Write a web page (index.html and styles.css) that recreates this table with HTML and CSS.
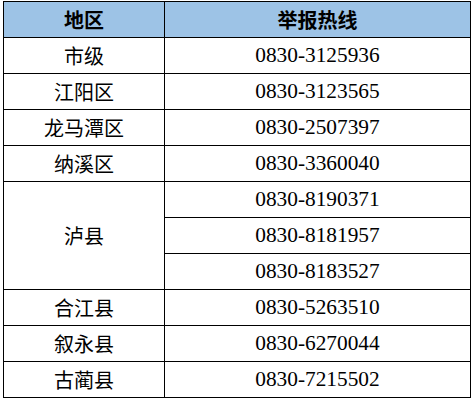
FILE: index.html
```html
<!DOCTYPE html>
<html lang="zh">
<head>
<meta charset="utf-8">
<link rel="stylesheet" href="styles.css">
</head>
<body>
<table class="hotline">
  <colgroup><col class="c-area"><col class="c-phone"></colgroup>
  <thead>
    <tr><th>地区</th><th>举报热线</th></tr>
  </thead>
  <tbody>
    <tr><td class="area">市级</td><td class="phone">0830-3125936</td></tr>
    <tr><td class="area">江阳区</td><td class="phone">0830-3123565</td></tr>
    <tr><td class="area">龙马潭区</td><td class="phone">0830-2507397</td></tr>
    <tr><td class="area">纳溪区</td><td class="phone">0830-3360040</td></tr>
    <tr><td class="area" rowspan="3">泸县</td><td class="phone">0830-8190371</td></tr>
    <tr><td class="phone">0830-8181957</td></tr>
    <tr><td class="phone">0830-8183527</td></tr>
    <tr><td class="area">合江县</td><td class="phone">0830-5263510</td></tr>
    <tr><td class="area">叙永县</td><td class="phone">0830-6270044</td></tr>
    <tr><td class="area">古蔺县</td><td class="phone">0830-7215502</td></tr>
  </tbody>
</table>
</body>
</html>
```
FILE: styles.css
```css
html, body {
  margin: 0;
  padding: 0;
  background: #fff;
}
body {
  padding: 1px 0 0 3px;
}
.hotline {
  border-collapse: collapse;
  width: 467px;
  table-layout: fixed;
  font-family: "Liberation Serif", "Noto Sans CJK SC", serif;
  font-size: 21.33px;
  color: #000;
}
.c-area { width: 161px; }
.c-phone { width: 306px; }
.hotline th,
.hotline td {
  border: 1px solid #000;
  height: 35px;
  padding: 0;
  text-align: center;
  vertical-align: middle;
  line-height: 1;
}
.hotline th {
  background: #9dc3e6;
  font-family: "Noto Sans CJK SC", sans-serif;
  font-weight: 700;
  font-size: 20px;
}
.area {
  font-family: "Noto Sans CJK SC", sans-serif;
  font-size: 20px;
}
```
